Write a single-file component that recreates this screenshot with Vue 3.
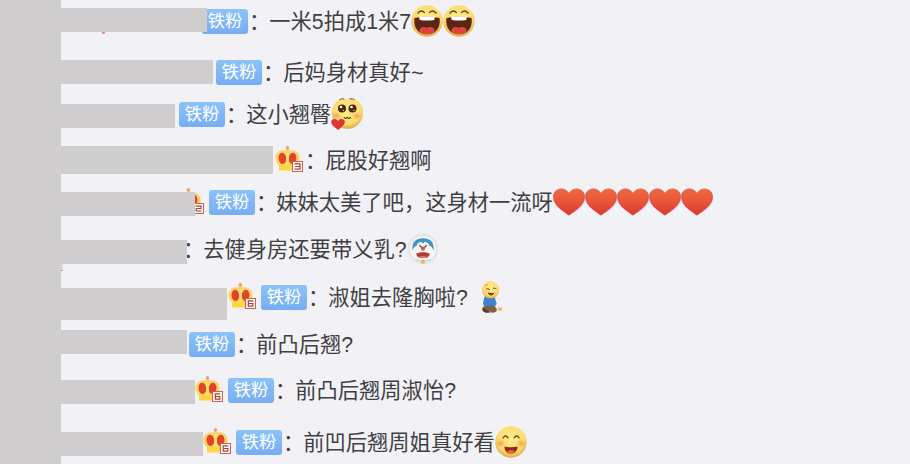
<template>
  <div class="chat">
    <svg class="defs" width="0" height="0" aria-hidden="true">
      <defs>
        <radialGradient id="face" cx="50%" cy="40%" r="62%">
          <stop offset="0" stop-color="#ffec8c" />
          <stop offset="0.7" stop-color="#fcdd70" />
          <stop offset="1" stop-color="#dca040" />
        </radialGradient>
        <radialGradient id="blush">
          <stop offset="0" stop-color="#fb8a50" stop-opacity="0.8" />
          <stop offset="1" stop-color="#fb9a50" stop-opacity="0" />
        </radialGradient>
        <linearGradient id="red" x1="0" y1="0" x2="0" y2="1">
          <stop offset="0" stop-color="#ef6a3b" />
          <stop offset="0.5" stop-color="#e9533a" />
          <stop offset="1" stop-color="#d53a32" />
        </linearGradient>
        <linearGradient id="gold" x1="0" y1="0" x2="0" y2="1">
          <stop offset="0" stop-color="#f8d478" />
          <stop offset="1" stop-color="#ffd53e" />
        </linearGradient>
      </defs>

      <symbol id="laugh" viewBox="0 0 32 32">
        <circle cx="16" cy="16" r="15.7" fill="url(#face)" />
        <path d="M7 8q3-3.6 6.4-.6M18.6 7.4q3.2-3 6.4.6" fill="none" stroke="#6b3d18" stroke-width="1.4" stroke-linecap="round" />
        <path d="M3.4 13Q16 10 28.6 13C30 23 24.5 29.2 16 29.2S2 23 3.4 13Z" fill="#5b2614" />
        <path d="M8 11.9Q16 10.7 24 11.9L23.2 15Q16 16 8.8 15Z" fill="#fff" />
        <path d="M8.4 26.4C8.4 23.4 10.4 22 13 22Q15 22 16 23Q17 22 19.4 22C22 22 23.8 23.4 23.6 26.4Q20.6 29.2 16 29.2T8.4 26.4Z" fill="#e2433f" />
      </symbol>

      <symbol id="shy" viewBox="0 0 32 32">
        <path d="M9 1.2H24A15.7 15.7 0 1 1 9 1.2Z" fill="url(#face)" />
        <path d="M8.4 1.8q2-1.6 5-.8M18.5 1q3-.8 5 .8" fill="none" stroke="#7c4a1a" stroke-width="1" />
        <ellipse cx="5.5" cy="18" rx="5" ry="4" fill="url(#blush)" />
        <ellipse cx="26" cy="18" rx="5.5" ry="4" fill="url(#blush)" />
        <circle cx="11" cy="10.6" r="4" fill="#4a2510" />
        <circle cx="21.5" cy="10.6" r="4" fill="#4a2510" />
        <circle cx="10" cy="9" r="1.3" fill="#fff" />
        <circle cx="20.5" cy="9" r="1.3" fill="#fff" />
        <circle cx="12.4" cy="12.4" r="0.8" fill="#d9a050" />
        <circle cx="22.9" cy="12.4" r="0.8" fill="#d9a050" />
        <path d="M13.2 19.4q1.6 2 3.2 0q1.6 2 3.2 0" fill="none" stroke="#6b3d18" stroke-width="1.1" stroke-linecap="round" />
        <path d="M7 32C3.5 29 .2 27 .2 23.8C.2 20.6 5 19.8 7 23C9 19.8 13.8 20.6 13.8 23.8C13.8 27 10.5 29.4 7 32Z" fill="#dc3536" />
      </symbol>

      <symbol id="heart" viewBox="0 0 32 32">
        <path d="M16 29.2C10 24.8.4 19.6.4 11C.4 1.8 12 .4 16 7.4C20 .4 31.6 1.8 31.6 11C31.6 19.6 22 24.8 16 29.2Z" fill="url(#red)" stroke="#c94832" stroke-width="0.6" />
      </symbol>

      <symbol id="cat" viewBox="0 0 32 32">
        <circle cx="16" cy="16" r="14.4" fill="#f4f4f5" stroke="#d2d3d6" stroke-width="1" />
        <circle cx="16" cy="16" r="14.2" fill="none" stroke="#e6e7e9" stroke-width="3.4" stroke-linecap="round" stroke-dasharray="0.1 4.36" />
        <path d="M5.4 17C4.6 8.6 9.4 5.2 16 5.2S27.4 8.6 26.6 17Z" fill="#3e94c4" />
        <path d="M6 21C4.6 15.6 8 13 10 12.6C10 8.6 15.4 7.6 16 11C16.6 7.6 22 8.6 22 12.6C24 13 27.4 15.6 26 21Q24 26.6 16 26.6T6 21Z" fill="#f7f5f3" />
        <path d="M12.5 12.2l2.2 2.4M19.5 12.2l-2.2 2.4" stroke="#4d4850" stroke-width="1.4" />
        <circle cx="16" cy="15.6" r="2.1" fill="#d2544d" />
        <path d="M9.4 20.6Q16 18 22.6 20.6Q23 25 16 25T9.4 20.6Z" fill="#ad3d32" />
        <path d="M11 24Q16 21.8 21 24Q16 26 11 24Z" fill="#e4785b" />
        <path d="M8 26.4Q16 30 24 26.4" fill="none" stroke="#c9cbd0" stroke-width="1" />
        <circle cx="16" cy="28.8" r="2" fill="#e8bd41" />
      </symbol>

      <symbol id="kneel" viewBox="0 0 32 32">
        <path d="M10.5 15.4Q16 13.4 20.4 15.6L22.6 22.4Q21 25.6 20 27L10.6 27L9 22Z" fill="#3f83d0" />
        <path d="M9.2 26Q16 23 22 26.4Q24.6 30.6 20 31.6Q17 32 16 30.4Q11 33 8.2 29.6Z" fill="#806044" />
        <path d="M8.2 26.2Q12 28.8 16.8 31.4L13 31.8Q8.6 31.6 8.2 26.2Z" fill="#4d3b30" />
        <circle cx="16.6" cy="8.8" r="8.7" fill="url(#face)" />
        <path d="M12 8.2q2-1.4 4 .6M18.8 7.4q2-1 3.6.6" fill="none" stroke="#7d4d1d" stroke-width="1" />
        <path d="M13.6 11.2Q17 12.6 20.6 11.4Q19 15.2 16 14.4Q14.2 13.8 13.6 11.2Z" fill="#84401b" />
        <path d="M11.2 4.8l2.4-1.3" stroke="#a36b28" stroke-width="0.8" />
        <path d="M24.6 25.4l1.8 1.6l2.6-.6l-1.6 2l2 1.4h-4.4l-1-1Z" fill="#f2b65d" />
      </symbol>

      <symbol id="smile" viewBox="0 0 32 32">
        <circle cx="16" cy="16" r="15.7" fill="url(#face)" />
        <ellipse cx="5.6" cy="17.4" rx="5.4" ry="4.8" fill="url(#blush)" />
        <ellipse cx="26.2" cy="17.4" rx="5.4" ry="4.8" fill="url(#blush)" />
        <path d="M8.2 11.8q2.4-3.6 4.8 0M19.2 11.8q2.4-3.6 4.8 0" fill="none" stroke="#69401c" stroke-width="1.4" stroke-linecap="round" />
        <path d="M9.4 20.4Q16 22 22.6 20.4C22.4 25 19.8 27.6 16 27.6S9.6 25 9.4 20.4Z" fill="#8c2b1b" />
        <path d="M11.6 25.6Q16 22.6 20.4 25.6Q18.6 27.6 16 27.6T11.6 25.6Z" fill="#ef5d4e" />
      </symbol>

      <symbol id="crown" viewBox="0 0 28 26">
        <path d="M4 24.6V19.4C1.6 17.4.2 14.6.4 11.6C.8 6.4 5.4 3.2 9.6 4.6Q11 3.2 12.5 3.2T15.4 4.6C19.6 3.2 24.2 6.4 24.6 11.6C24.8 14.6 23.4 17.4 21 19.4V24.6Z" fill="url(#gold)" />
        <ellipse cx="7.4" cy="12.4" rx="3.9" ry="5.6" fill="#e0452c" transform="rotate(-6 7.4 12.4)" />
        <ellipse cx="17.6" cy="12.4" rx="3.9" ry="5.6" fill="#e0452c" transform="rotate(6 17.6 12.4)" />
        <path d="M12.5 7v12" stroke="#fbe06c" stroke-width="2.8" />
        <circle cx="12.4" cy="1.9" r="1.8" fill="#e6a665" />
      </symbol>
    </svg>

    <div class="side"></div>
    <ul class="list">
      <li
        v-for="(m, i) in messages"
        :key="i"
        class="row"
        :style="{ marginTop: m.gap + 'px', paddingLeft: m.indent + 'px' }"
      >
        <div v-if="m.crown" class="crown">
          <svg width="28" height="26"><use href="#crown" /></svg>
          <svg class="level" width="11" height="11" viewBox="0 0 11 11">
            <rect x="0.5" y="0.5" width="10" height="10" fill="#fff8f5" stroke="#cb6259" />
            <path :d="levels[m.crown]" fill="none" stroke="#a9443c" stroke-width="1.2" />
          </svg>
        </div>
        <span v-if="m.fan" class="tag">铁粉</span>
        <span class="text"><span class="colon">：</span>{{ m.text }}</span>
        <svg v-for="(e, n) in m.emojis" :key="n" class="emoji" width="32" height="32">
          <use :href="'#' + e" />
        </svg>
        <span v-if="m.trace" :class="['trace', m.trace]"></span>
        <div class="mask" :style="{ top: m.mask[0] + 'px', width: m.mask[1] + 'px', height: m.mask[2] + 'px' }"></div>
      </li>
    </ul>
  </div>
</template>

<script setup>
// mask: [top inside the row, width, height]
const messages = [
  { gap: 3, indent: 141, fan: true, text: '一米5拍成1米7', emojis: ['laugh', 'laugh'], mask: [5, 146, 24], trace: 'name' },
  { gap: 15, indent: 155, fan: true, text: '后妈身材真好~', mask: [6, 152, 24] },
  { gap: 6, indent: 118, fan: true, text: '这小翘臀', emojis: ['shy'], mask: [8, 114, 24] },
  { gap: 10, indent: 214, crown: 3, text: '屁股好翘啊', mask: [4, 212, 28] },
  { gap: 6, indent: 115, crown: 2, fan: true, text: '妹妹太美了吧，这身材一流呀', emojis: ['heart', 'heart', 'heart', 'heart', 'heart'], mask: [8, 134, 24] },
  { gap: 11, indent: 121, text: '去健身房还要带义乳?', emojis: ['cat'], mask: [9, 126, 24], trace: 'edge' },
  { gap: 12, indent: 167, crown: 6, fan: true, text: '淑姐去隆胸啦? ', emojis: ['kneel'], mask: [9, 166, 32] },
  { gap: 11, indent: 128, fan: true, text: '前凸后翘?', mask: [4, 126, 24] },
  { gap: 10, indent: 134, crown: 6, fan: true, text: '前凸后翘周淑怡?', mask: [8, 134, 24] },
  { gap: 16, indent: 142, crown: 6, fan: true, text: '前凹后翘周姐真好看', emojis: ['smile'], mask: [8, 142, 24] }
]

const levels = {
  2: 'M2.5 3.2H8V5.5H3.2V8H8.6',
  3: 'M2.5 2.8H8V8.2H2.5M3 5.5H8',
  6: 'M8.2 2.8H3.3V8.2H7.8V5.5H3.5'
}
</script>

<style>
body {
  margin: 0;
  background: #f2f1f6;
}
</style>

<style scoped>
.chat {
  display: flex;
  height: 464px;
  overflow: hidden;
  background: #f2f1f6;
  color: #3f3f43;
  font-family: "Liberation Sans", "Noto Sans CJK SC", sans-serif;
}

.defs {
  position: absolute;
}

.side {
  width: 61px;
  background: #cfcdce;
}

.list {
  flex: 1;
  display: flex;
  flex-direction: column;
  margin: 0;
  padding: 0;
  list-style: none;
}

.row {
  position: relative;
  display: flex;
  align-items: center;
  flex: none;
  height: 36px;
}

.crown {
  position: relative;
  width: 29px;
  height: 26px;
  margin-top: -2px;
}

.crown svg {
  display: block;
}

.crown .level {
  position: absolute;
  right: 1px;
  bottom: 0;
}

.tag {
  width: 46px;
  height: 25px;
  border-radius: 3px;
  background: linear-gradient(#8ac3f8, #76adf3);
  color: #fff;
  font-size: 17.3px;
  line-height: 25px;
  text-align: center;
}

.crown + .tag {
  margin-left: 4px;
}

.text {
  padding-top: 2px;
  font-size: 21.28px;
  line-height: 36px;
  white-space: pre;
}

.colon {
  display: inline-block;
  text-indent: 1px;
  width: 21.3px;
}

.emoji {
  flex: none;
}

.mask {
  position: absolute;
  left: 0;
  background: #cfcdce;
}

.trace {
  position: absolute;
}

.name {
  left: 41px;
  top: 29px;
  width: 3px;
  height: 2px;
  border-radius: 0 0 2px 2px;
  background: #e3849c;
}

.edge {
  left: 0;
  top: 33px;
  width: 2px;
  height: 7px;
  background: #ecd5e6;
  border-bottom: 1px solid #c58ab8;
  box-sizing: border-box;
}
</style>
